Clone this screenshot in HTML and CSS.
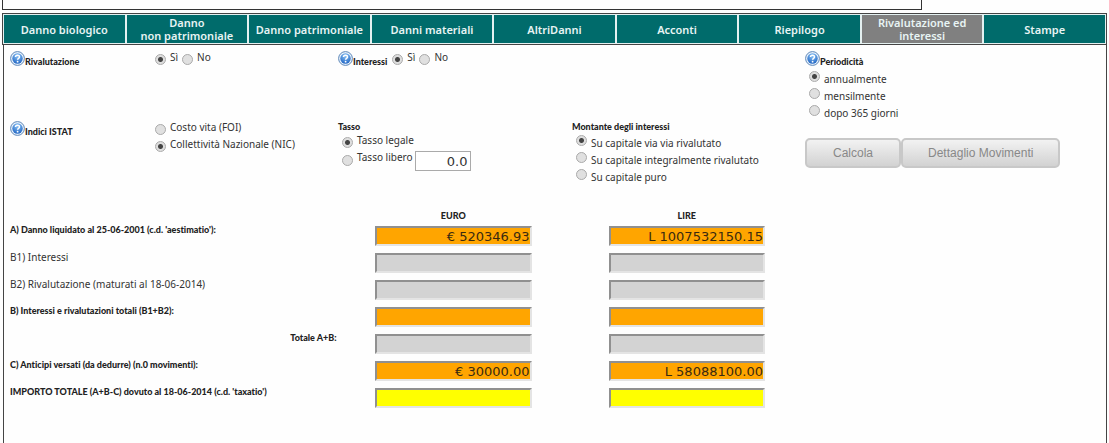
FILE: index.html
```html
<!DOCTYPE html>
<html lang="it">
<head>
<meta charset="utf-8">
<title>Rivalutazione ed interessi</title>
<link rel="stylesheet" href="styles.css">
</head>
<body>
<svg class="defs" aria-hidden="true">
  <defs>
    <radialGradient id="ball" cx="50%" cy="25%" r="75%">
      <stop offset="0" stop-color="#8cc4f6"/>
      <stop offset="1" stop-color="#2166c4"/>
    </radialGradient>
    <symbol id="help" viewBox="0 0 15 15">
      <circle cx="7.5" cy="7.5" r="6.9" fill="#eaf3fc" stroke="#5d87b8" stroke-width="1"/>
      <circle cx="7.5" cy="7.5" r="5.2" fill="url(#ball)"/>
      <path d="M5.5 6.1C5.5 3.5 9.5 3.6 9.5 5.9C9.5 7.3 7.6 7.3 7.6 8.7" fill="none" stroke="#fff" stroke-width="1.5"/>
      <circle cx="7.6" cy="10.7" r="0.9" fill="#fff"/>
    </symbol>
  </defs>
</svg>
<div class="page">
  <div class="header-box"></div>
  <nav class="tabs">
    <a class="tab" href="#">Danno biologico</a>
    <a class="tab" href="#">Danno<br>non patrimoniale</a>
    <a class="tab" href="#">Danno patrimoniale</a>
    <a class="tab" href="#">Danni materiali</a>
    <a class="tab" href="#">AltriDanni</a>
    <a class="tab" href="#">Acconti</a>
    <a class="tab" href="#">Riepilogo</a>
    <a class="tab tab-active" href="#" aria-current="page">Rivalutazione ed interessi</a>
    <a class="tab" href="#">Stampe</a>
  </nav>
  <main class="panel">
    <form class="form">
      <div class="options">
        <div class="title" id="t-riv"><svg class="help"><use href="#help"/></svg><span>Rivalutazione</span></div>
        <div class="inline" role="radiogroup" aria-labelledby="t-riv">
          <label class="opt"><input type="radio" name="riv" checked><span>Sì</span></label>
          <label class="opt"><input type="radio" name="riv"><span>No</span></label>
        </div>
        <div class="inline wide" role="radiogroup" aria-labelledby="t-int">
          <div class="title" id="t-int"><svg class="help"><use href="#help"/></svg><span>Interessi</span></div>
          <label class="opt"><input type="radio" name="int" checked><span>Sì</span></label>
          <label class="opt"><input type="radio" name="int"><span>No</span></label>
        </div>
        <div role="radiogroup" aria-labelledby="t-per">
          <div class="title" id="t-per"><svg class="help"><use href="#help"/></svg><span>Periodicità</span></div>
          <div class="stack">
            <label class="opt low"><input type="radio" name="per" checked><span>annualmente</span></label>
            <label class="opt low"><input type="radio" name="per"><span>mensilmente</span></label>
            <label class="opt low"><input type="radio" name="per"><span>dopo 365 giorni</span></label>
          </div>
        </div>

        <div class="title" id="t-istat"><svg class="help"><use href="#help"/></svg><span>Indici ISTAT</span></div>
        <div role="radiogroup" aria-labelledby="t-istat">
          <label class="opt"><input type="radio" name="istat"><span>Costo vita (FOI)</span></label>
          <label class="opt"><input type="radio" name="istat" checked><span>Collettività Nazionale (NIC)</span></label>
        </div>
        <div role="radiogroup" aria-labelledby="t-tasso">
          <div class="subtitle" id="t-tasso">Tasso</div>
          <div class="stack">
            <label class="opt"><input type="radio" name="tasso" checked><span>Tasso legale</span></label>
            <div class="rate-row">
              <label class="opt"><input type="radio" name="tasso"><span>Tasso libero</span></label>
              <input class="rate" type="text" value="0.0" aria-label="Tasso libero">
            </div>
          </div>
        </div>
        <div role="radiogroup" aria-labelledby="t-mont">
          <div class="subtitle" id="t-mont">Montante degli interessi</div>
          <div class="stack">
            <label class="opt low"><input type="radio" name="mont" checked><span>Su capitale via via rivalutato</span></label>
            <label class="opt low"><input type="radio" name="mont"><span>Su capitale integralmente rivalutato</span></label>
            <label class="opt low"><input type="radio" name="mont"><span>Su capitale puro</span></label>
          </div>
        </div>
        <div class="actions">
          <button type="button" class="btn">Calcola</button>
          <button type="button" class="btn btn-wide">Dettaglio Movimenti</button>
        </div>
      </div>

      <table class="totals">
        <colgroup><col class="c-label"><col class="c-value"><col class="c-value"><col></colgroup>
        <thead>
          <tr><td></td><th scope="col">EURO</th><th scope="col">LIRE</th><td></td></tr>
        </thead>
        <tbody>
          <tr><th scope="row">A) Danno liquidato al 25-06-2001 (c.d. 'aestimatio'):</th>
            <td><input class="amount orange" readonly value="€ 520346.93" aria-label="Danno liquidato, euro"></td>
            <td><input class="amount orange" readonly value="L 1007532150.15" aria-label="Danno liquidato, lire"></td><td></td></tr>
          <tr><th scope="row" class="plain">B1) Interessi</th>
            <td><input class="amount" readonly aria-label="Interessi, euro"></td>
            <td><input class="amount" readonly aria-label="Interessi, lire"></td><td></td></tr>
          <tr><th scope="row" class="plain">B2) Rivalutazione (maturati al 18-06-2014)</th>
            <td><input class="amount" readonly aria-label="Rivalutazione, euro"></td>
            <td><input class="amount" readonly aria-label="Rivalutazione, lire"></td><td></td></tr>
          <tr><th scope="row">B) Interessi e rivalutazioni totali (B1+B2):</th>
            <td><input class="amount orange" readonly aria-label="Totale B, euro"></td>
            <td><input class="amount orange" readonly aria-label="Totale B, lire"></td><td></td></tr>
          <tr><th scope="row" class="right">Totale A+B:</th>
            <td><input class="amount" readonly aria-label="Totale A+B, euro"></td>
            <td><input class="amount" readonly aria-label="Totale A+B, lire"></td><td></td></tr>
          <tr><th scope="row">C) Anticipi versati (da dedurre) (n.0 movimenti):</th>
            <td><input class="amount orange" readonly value="€ 30000.00" aria-label="Anticipi, euro"></td>
            <td><input class="amount orange" readonly value="L 58088100.00" aria-label="Anticipi, lire"></td><td></td></tr>
          <tr><th scope="row">IMPORTO TOTALE (A+B-C) dovuto al 18-06-2014 (c.d. 'taxatio')</th>
            <td><input class="amount yellow" readonly aria-label="Importo totale, euro"></td>
            <td><input class="amount yellow" readonly aria-label="Importo totale, lire"></td><td></td></tr>
        </tbody>
      </table>
    </form>
  </main>
</div>
</body>
</html>
```
FILE: styles.css
```css
* { box-sizing: border-box; }
body {
  margin: 0;
  background: #fefefe;
  color: #333;
  font-family: "Noto Sans", sans-serif;
  font-size: 10px;
  line-height: 14px;
}
.defs { position: absolute; width: 0; height: 0; }
.page {
  display: flex;
  flex-direction: column;
  min-height: 100vh;
  padding: 0 2px;
}
.header-box {
  width: 83.3%;
  height: 10px;
  margin-bottom: 3px;
  border: 1px solid #333;
  border-top: 0;
}
.tabs {
  display: grid;
  grid-template-columns: repeat(9, minmax(0, 1fr));
  gap: 2px;
  padding: 1px;
  background: #e4f0f0;
  border: 1px solid #444;
}
.tab {
  display: flex;
  align-items: center;
  justify-content: center;
  min-height: 28px;
  background: #006b6b;
  color: #e8f4f4;
  font-weight: 600;
  font-size: 11px;
  line-height: 13px;
  text-align: center;
  text-decoration: none;
}
.tab-active { background: #808080; }
.panel {
  flex: 1;
  margin-left: 1px;
  padding: 5px 0 0 6px;
  border: solid #444;
  border-width: 0 1px;
}
.options {
  display: grid;
  grid-template-columns: 145fr 183fr 234fr 233fr 301fr;
  min-height: 153px;
  align-content: start;
}
.options > * { min-width: 0; }
.wide { grid-column: span 2; }
.title, .subtitle, .totals th {
  color: #222;
  font-family: Lato, sans-serif;
  font-weight: 900;
  font-size: 9px;
  font-variant-ligatures: none;
}
.title { display: flex; align-items: flex-end; height: 19px; }
.help { width: 15px; height: 15px; margin-bottom: 3px; flex: none; }
.subtitle { line-height: 12px; padding-top: 1px; }
.inline { display: flex; }
.inline .opt { margin-right: 4px; }
.inline .title { margin-right: 5px; }
.stack { padding-left: 4px; }
.opt {
  display: flex;
  gap: 4px;
  min-height: 17px;
  white-space: nowrap;
}
.opt input {
  appearance: none;
  flex: none;
  width: 11px;
  height: 11px;
  margin: 4px 0 0;
  border: 1px solid #aaa;
  border-radius: 50%;
  background: #e0e0e0;
}
.opt input:checked { background: radial-gradient(circle, #444 0 2px, #dedede 3px); }
.opt.low input { margin-top: 2px; }
.opt.low span { padding-top: 3px; }
.rate-row { display: flex; gap: 2px; }
.rate-row .opt input { margin-top: 5px; }
.rate {
  width: 56px;
  height: 20px;
  margin: 1px 0 0;
  padding: 0 2px;
  border: 1px solid #aaa;
  background: #fff;
  color: #333;
  font: 13px "DejaVu Sans", sans-serif;
  text-align: right;
}
.actions { display: flex; align-items: flex-start; padding-top: 18px; }
.btn {
  height: 30px;
  padding: 0 26px;
  border: 2px solid #c8c8c8;
  border-radius: 5px;
  background: linear-gradient(#f2f2f2, #d2d2d2);
  color: #888;
  font: 12px "Liberation Sans", sans-serif;
  white-space: nowrap;
}
.btn-wide { padding: 0 25px; }
.totals {
  width: 100%;
  table-layout: fixed;
  border-collapse: collapse;
}
.c-label { width: 29.8%; }
.c-value { width: 21.3%; }
.totals td, .totals th { padding: 0; vertical-align: top; }
.totals thead th { height: 19px; padding-top: 6px; text-align: center; }
.totals tbody tr { height: 27px; }
.totals tbody th { text-align: left; white-space: nowrap; }
.totals tbody .right { text-align: right; }
.totals tbody .plain { color: #333; font-family: "Noto Sans", sans-serif; font-weight: normal; font-size: 10px; }
.totals tbody td { text-align: center; }
.amount {
  display: block;
  width: 67%;
  height: 20px;
  margin: 3px auto 0;
  padding: 0;
  border: 2px solid;
  border-color: #909090 #e4e4e4 #e4e4e4 #909090;
  background: #d3d3d3;
  color: #3a2a10;
  font: 13px "DejaVu Sans", sans-serif;
  text-align: right;
}
.orange { background: #ffa500; }
.yellow { background: #ffff00; }
```
